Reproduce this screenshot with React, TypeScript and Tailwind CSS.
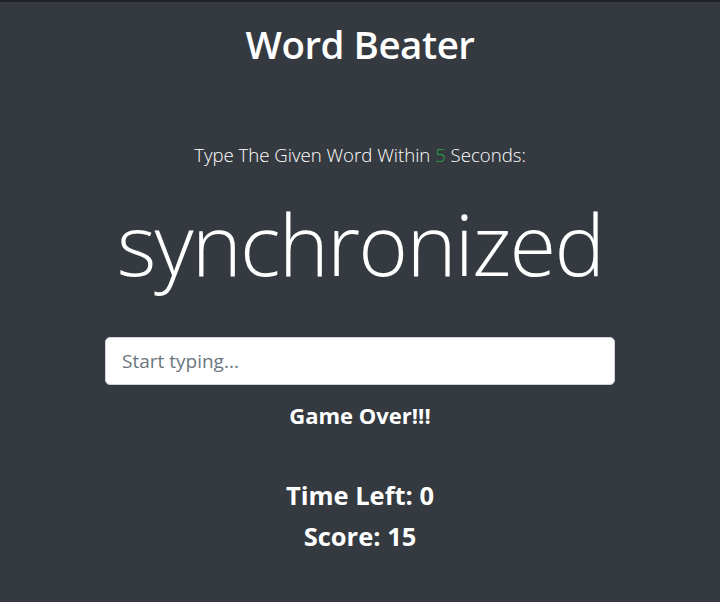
import React from "react";

export default function App() {
  return (
    <div
      className="min-h-[602px] w-full bg-[#343a40] text-white"
      style={{ fontFamily: '"Open Sans", "Noto Sans", sans-serif' }}
    >
      <div className="h-[2px] bg-[#202326]" />
      <div className="mx-auto w-[510px] flex flex-col items-center">
        <h1 className="mt-[18px] text-[38.5px] leading-[48px] font-semibold tracking-[-0.5px]">Word Beater</h1>
        <p className="mt-[73px] text-[18.6px] leading-[28px] font-light text-white">
          Type The Given Word Within <span className="text-[#28a745]">5</span> Seconds:
        </p>
        <h2 className="mt-[19px] text-[85px] leading-[110px] font-light tracking-[-1.8px]">synchronized</h2>
        <input
          className="mt-[39px] w-[510px] h-[48px] rounded-[5px] border border-[#ced4da] bg-white px-4 text-[19px] text-[#495057] placeholder:text-[#6c757d] outline-none"
          placeholder="Start typing..."
        />
        <h4 className="mt-[16px] text-[22px] leading-[28px] font-bold">Game Over!!!</h4>
        <h3 className="mt-[50px] text-[25.5px] leading-[32px] font-bold">Time Left: 0</h3>
        <h3 className="mt-[9px] text-[25.5px] leading-[32px] font-bold">Score: 15</h3>
      </div>
    </div>
  );
}
